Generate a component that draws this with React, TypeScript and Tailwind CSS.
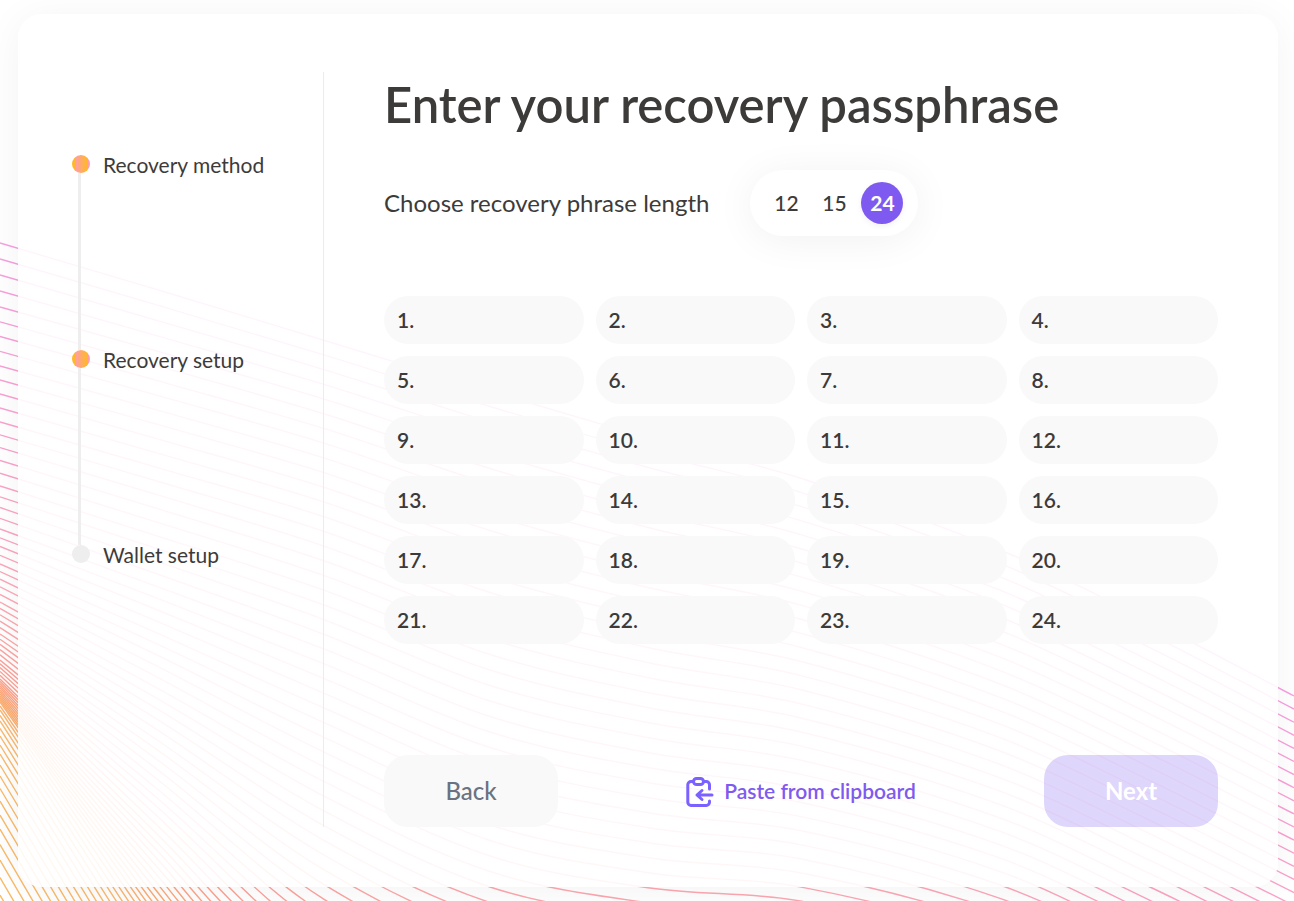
import { useState } from "react";

const STEPS = [
  { label: "Recovery method", reached: true },
  { label: "Recovery setup", reached: true },
  { label: "Wallet setup", reached: false },
];

const LENGTHS = [12, 15, 24];

type Point = [number, number];

/* Sample positions of a sequence, read with linear interpolation. */
function sample(table: Point[], at: number): number {
  for (let k = 1; k < table.length; k++) {
    const [x0, y0] = table[k - 1];
    const [x1, y1] = table[k];
    if (at <= x1) return y0 + ((y1 - y0) * (at - x0)) / (x1 - x0);
  }
  return table[table.length - 1][1];
}

/* Height at which each strand enters on the left. */
const LEFT: Point[] = [
  [0, 243], [4, 307], [8, 366], [12, 422], [17, 486], [21, 529], [25, 564],
  [30, 602], [35, 634], [40, 660], [45, 679], [50, 690], [52, 694],
  [56, 702], [58, 710], [60, 721], [62, 736], [64, 754], [66, 776],
  [68, 801], [70, 829], [72, 860], [76, 930], [82, 1050],
];

/* x, height of the first strand there, distance between strands. */
const COLUMNS = [
  [323, 340, 14.7],
  [490, 391, 15.5],
  [650, 438, 15],
  [800, 478, 14.1],
  [1000, 550, 13.4],
  [1150, 621, 13.3],
  [1294, 696, 13.1],
];

const COLORS: [number, number[]][] = [
  [0, [248, 158, 226]],
  [17, [252, 162, 198]],
  [30, [253, 168, 178]],
  [44, [253, 160, 146]],
  [52, [252, 168, 116]],
  [60, [250, 186, 112]],
  [82, [250, 186, 94]],
];

function strandColor(i: number): string {
  const channel = (c: number) =>
    Math.round(sample(COLORS.map(([k, rgb]) => [k, rgb[c]] as Point), i));
  return `rgb(${channel(0)},${channel(1)},${channel(2)})`;
}

function strandPath(i: number): string {
  const left = sample(LEFT, i);
  const extra = i > 50 ? 0.05 * (i - 50) * (i - 50) : 0;
  const mid = 340 + 14.7 * i + extra;
  const pts: Point[] = [
    [0, left],
    [160, left + (mid - left) * 0.49],
    ...COLUMNS.map(([x, y, gap]) => [x, y + gap * i + extra] as Point),
  ];
  let d = `M${pts[0][0]} ${pts[0][1].toFixed(1)}`;
  for (let k = 0; k < pts.length - 1; k++) {
    const p0 = pts[Math.max(k - 1, 0)];
    const p1 = pts[k];
    const p2 = pts[k + 1];
    const p3 = pts[Math.min(k + 2, pts.length - 1)];
    const h = p2[0] - p1[0];
    const m1 = (p2[1] - p0[1]) / (p2[0] - p0[0]);
    const m2 = (p3[1] - p1[1]) / (p3[0] - p1[0]);
    d += `C${(p1[0] + h / 3).toFixed(1)} ${(p1[1] + (m1 * h) / 3).toFixed(1)} ${(p2[0] - h / 3).toFixed(1)} ${(p2[1] - (m2 * h) / 3).toFixed(1)} ${p2[0]} ${p2[1].toFixed(1)}`;
  }
  return d;
}

const STRANDS = Array.from({ length: 83 }, (_, i) => ({
  d: strandPath(i),
  color: strandColor(i),
}));

function Waves() {
  return (
    <svg
      className="absolute inset-0 h-full w-full"
      viewBox="0 0 1294 901"
      preserveAspectRatio="none"
      fill="none"
      aria-hidden="true"
    >
      {STRANDS.map((s) => (
        <path key={s.d} d={s.d} stroke={s.color} strokeWidth="1.4" />
      ))}
    </svg>
  );
}

function PasteIcon() {
  return (
    <svg
      className="h-[31px] w-7"
      viewBox="0 0 28 31"
      fill="none"
      stroke="#7b61ff"
      strokeWidth="3"
      strokeLinecap="round"
      strokeLinejoin="round"
      aria-hidden="true"
    >
      <path d="M7 5.5H5A3.2 3.2 0 0 0 1.8 8.7V26.3A3.2 3.2 0 0 0 5 29.5H20.3A3.2 3.2 0 0 0 23.5 26.3V25" />
      <path d="M18 5.5H20.3A3.2 3.2 0 0 1 23.5 8.7V13" />
      <rect x="7.5" y="2.5" width="10" height="6" rx="3" />
      <path d="M26 19H11M16 14.5L11 19L16 23.5" />
    </svg>
  );
}

function Steps() {
  return (
    <ol className="flex w-[251px] shrink-0 flex-col pt-[83px]">
      {STEPS.map((step, i) => {
        const last = i === STEPS.length - 1;
        return (
          <li key={step.label} className={last ? "flex gap-[13px]" : "flex h-[195px] gap-[13px]"}>
            <div className="flex w-[18px] flex-col">
              <span
                className={
                  step.reached
                    ? "size-[18px] rounded-full bg-[linear-gradient(90deg,#ffb82c_0_3px,#ff9dac_3px,#ffb82c_15px,#ff9dac_15px)]"
                    : "size-[18px] rounded-full bg-[#eeeeee]"
                }
              />
              {!last && <span className="ml-1.5 w-[3px] flex-1 bg-[#eeeeee]" />}
            </div>
            <span className="h-5 text-[21px] leading-5">{step.label}</span>
          </li>
        );
      })}
    </ol>
  );
}

export default function App() {
  const [length, setLength] = useState(24);

  return (
    <div className="relative flex min-h-screen bg-white pt-3.5 pr-4 pb-3.5 pl-[18px] font-['Lato','Open_Sans',sans-serif] text-[#3d3b39]">
      <Waves />
      <main className="relative flex flex-1 rounded-3xl bg-white/90 pt-[58px] pr-15 pb-15 pl-[54px] shadow-[0_4px_40px_rgba(0,0,0,0.05)]">
        <Steps />
        <form
          className="flex flex-1 flex-col border-l border-[#ececec] pl-15"
          onSubmit={(e) => e.preventDefault()}
        >
          <h1 className="text-[49px] leading-16 font-semibold">Enter your recovery passphrase</h1>

          <div className="mt-[34px] flex items-center gap-[41px]">
            <span id="length-label" className="text-[24px] leading-8">
              Choose recovery phrase length
            </span>
            <div
              role="group"
              aria-labelledby="length-label"
              className="flex gap-1.5 rounded-full bg-white px-[15px] py-3 shadow-[0_4px_40px_rgba(0,0,0,0.06)]"
            >
              {LENGTHS.map((n) => (
                <button
                  key={n}
                  type="button"
                  aria-pressed={n === length}
                  onClick={() => setLength(n)}
                  className={
                    n === length
                      ? "size-[42px] rounded-full bg-[#7f5af0] text-[21px] font-bold text-white shadow-[0_2px_6px_rgba(0,0,0,0.06)]"
                      : "size-[42px] rounded-full text-[21px] font-medium"
                  }
                >
                  {n}
                </button>
              ))}
            </div>
          </div>

          <div className="mt-15 grid grid-cols-4 gap-3">
            {Array.from({ length }, (_, i) => (
              <label
                key={i}
                className="flex h-12 items-center gap-2 rounded-full bg-[#f9f9f9] px-[13px] text-[21px] font-semibold"
              >
                {i + 1}.
                <input
                  type="text"
                  autoComplete="off"
                  className="w-full min-w-0 bg-transparent font-medium outline-none"
                />
              </label>
            ))}
          </div>

          <div className="mt-auto flex items-center justify-between pt-10">
            <button
              type="button"
              className="h-18 w-[174px] rounded-3xl bg-[#f9f9f9] text-[24px] font-medium text-[#6b7280]"
            >
              Back
            </button>
            <button
              type="button"
              className="flex items-center gap-2.5 text-[21px] font-semibold text-[#7f5af0]"
            >
              <PasteIcon />
              Paste from clipboard
            </button>
            <button
              type="submit"
              disabled
              className="h-18 w-[174px] rounded-3xl bg-[#7f5af0]/25 text-[24px] font-bold text-white"
            >
              Next
            </button>
          </div>
        </form>
      </main>
    </div>
  );
}
